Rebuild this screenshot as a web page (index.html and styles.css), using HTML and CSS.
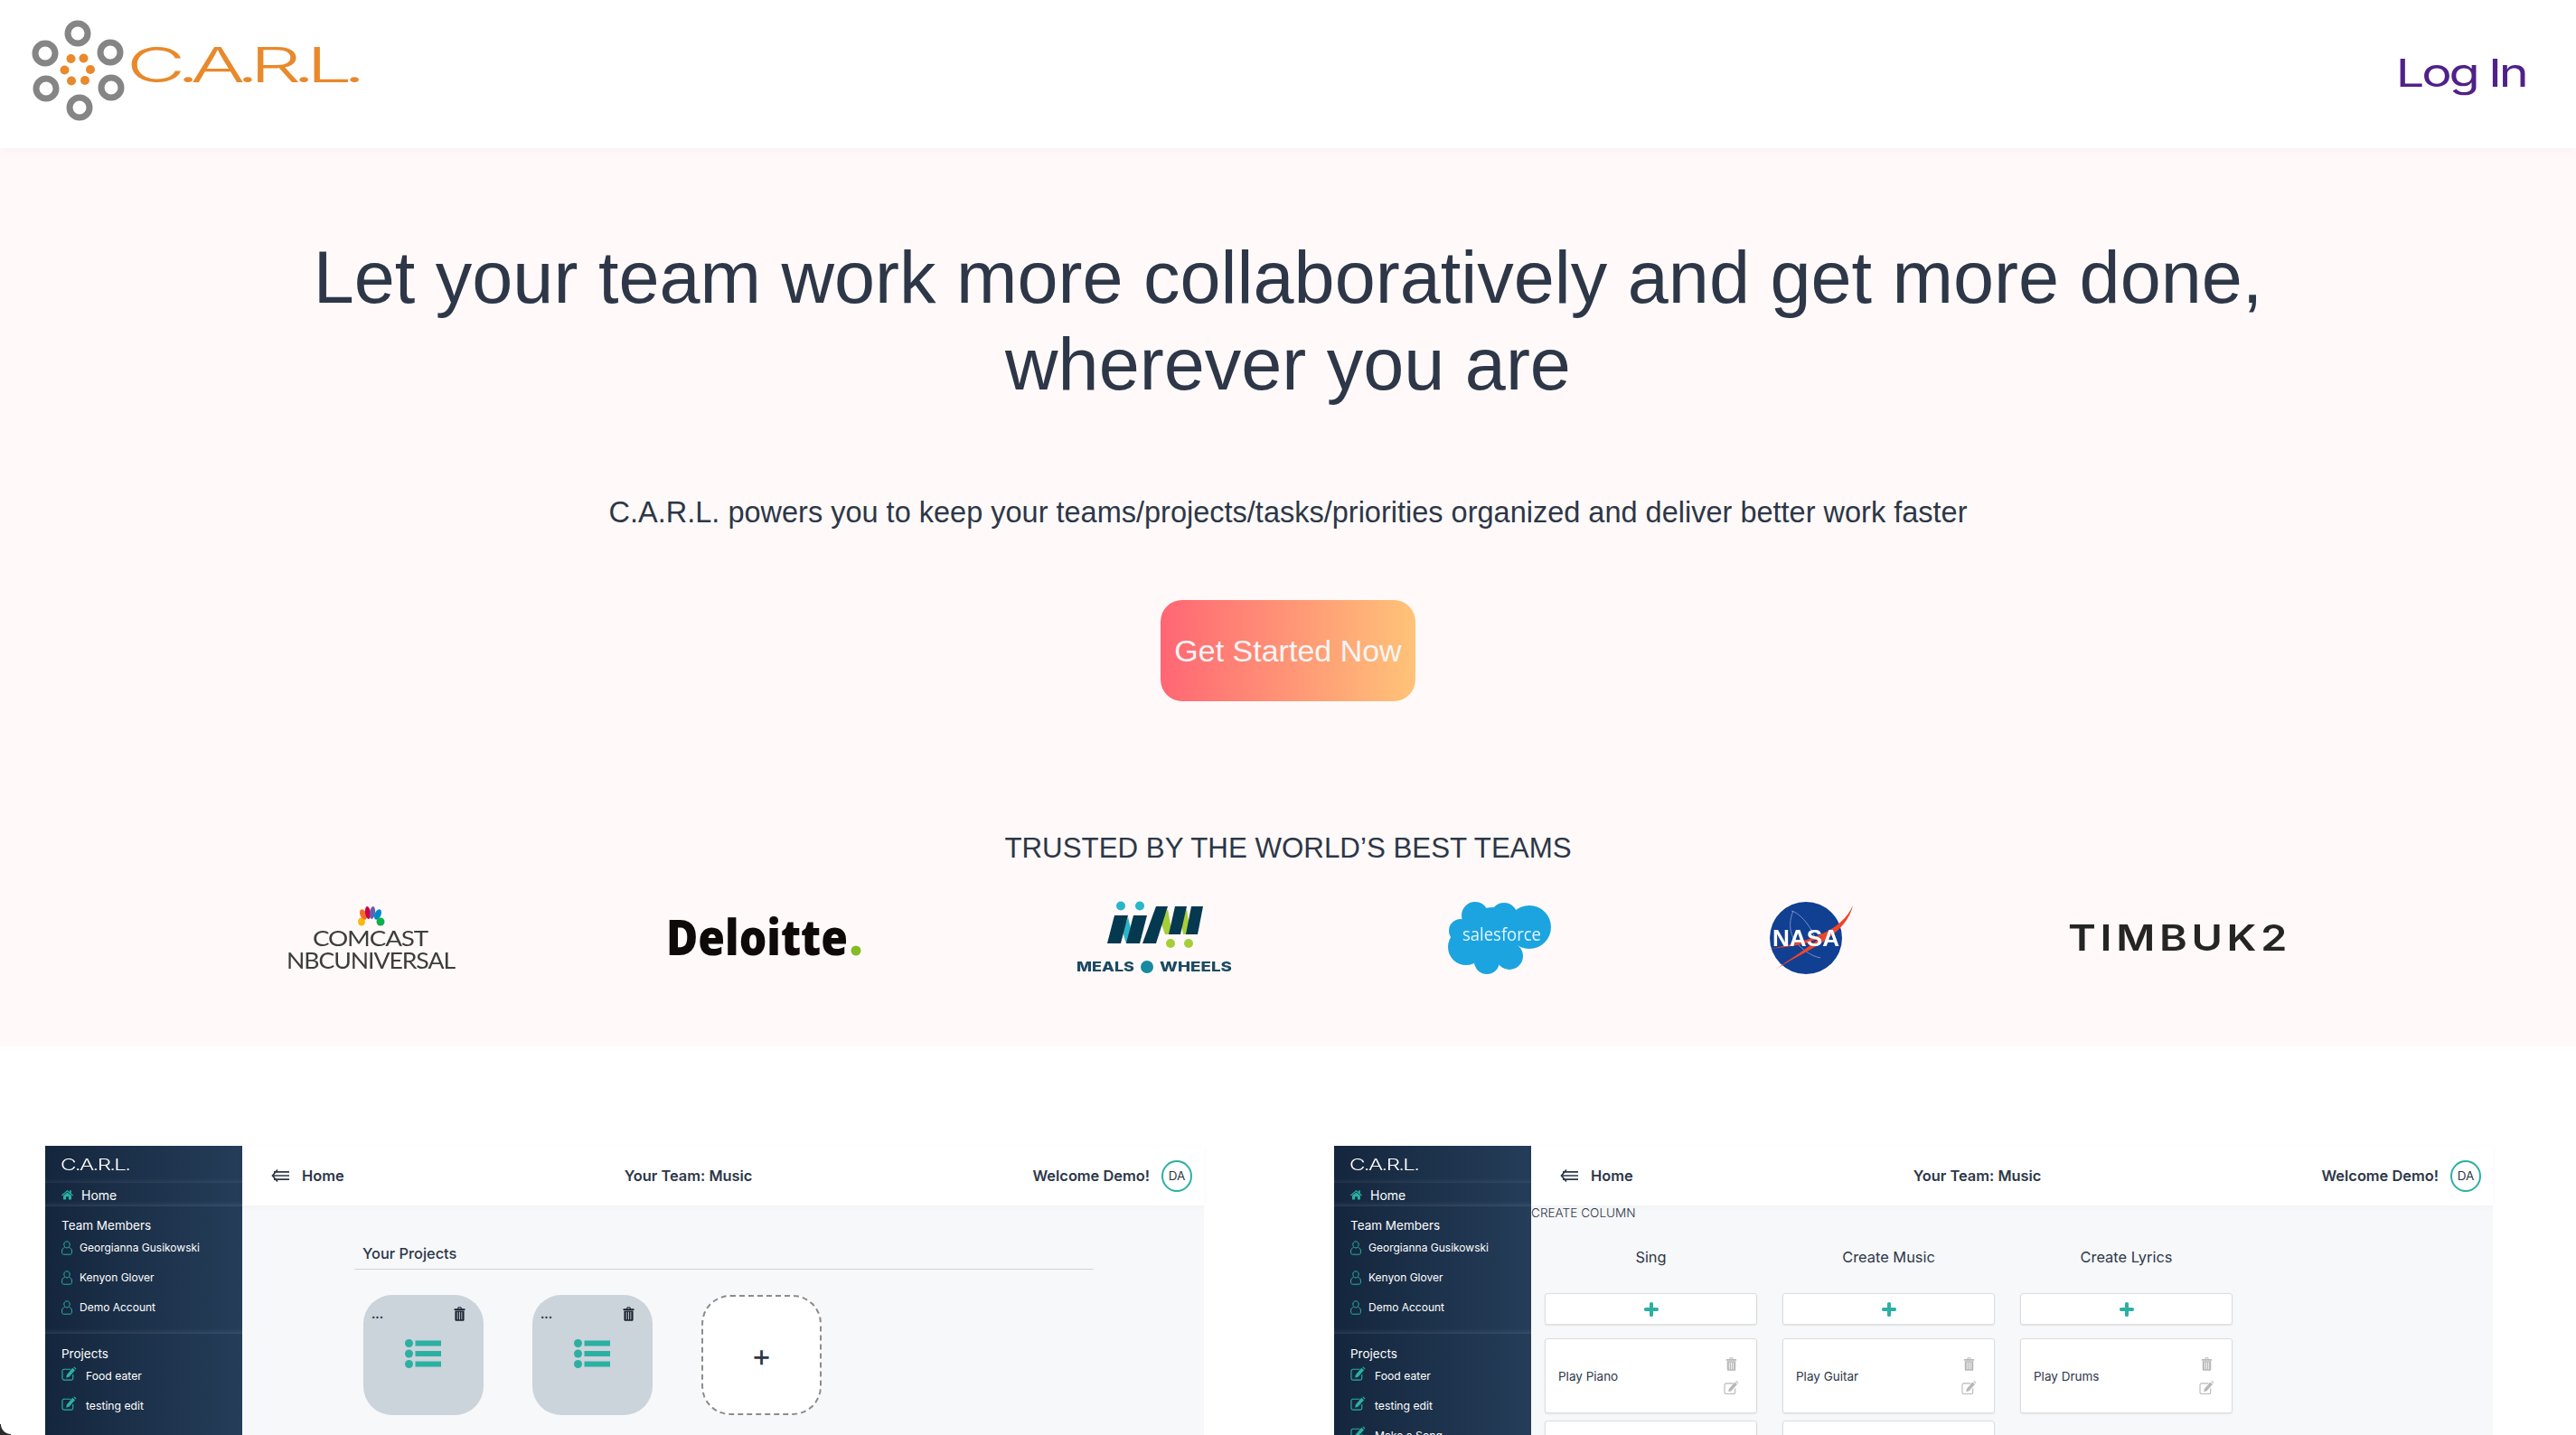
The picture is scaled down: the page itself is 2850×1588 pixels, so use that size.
FILE: index.html
```html
<!DOCTYPE html>
<html lang="en">
<head>
<meta charset="utf-8">
<title>C.A.R.L.</title>
<link rel="stylesheet" href="styles.css">
</head>
<body>
<svg class="sprite" width="0" height="0" aria-hidden="true">
  <symbol id="i-home" viewBox="0 0 14 12"><path d="M7 0.5 0 6.600l.8.9L7 2.200l6.200 5.300.8-.9-2.300-2V1h-1.800v1.900zM2.200 7.200V12h3.300V8.500h3V12h3.300V7.200L7 3.200z" fill="currentColor"/></symbol>
  <symbol id="i-user" viewBox="0 0 12 16"><g fill="none" stroke="currentColor" stroke-width="1"><path d="M6 .8c2 0 3.200 1.500 3.200 3.300S8 8 6 8 2.800 5.900 2.800 4.100 4 .8 6 .8z"/><path d="M3.500 7.500C1.500 8.300.6 9.300.6 11v2.200c0 1.200.8 2 2 2h6.800c1.200 0 2-.8 2-2V11c0-1.700-.9-2.700-2.900-3.500"/></g></symbol>
  <symbol id="i-edit" viewBox="0 0 18 16"><path d="M11 3H3a2 2 0 0 0-2 2v8.500a2 2 0 0 0 2 2h8.500a2 2 0 0 0 2-2V9" fill="none" stroke="currentColor" stroke-width="1.200"/><path d="M13 1.500 16 4 9 12l-3.500 1 .6-3.500zM14 .5l1-.5 2.500 2.300-.8 1z" fill="currentColor"/></symbol>
  <symbol id="i-trash" viewBox="0 0 14 18"><path d="M4.500 2.500V1.200L5.500.4h3l1 .8v1.300H13a.8.800 0 0 1 .8.800v1.200H.2V3.300A.8.800 0 0 1 1 2.500zM5.700 2.500h2.600v-1H5.700zM1.300 5h11.400v11.300c0 .9-.7 1.500-1.500 1.500H2.800c-.8 0-1.500-.6-1.500-1.500zM3.800 6.500v9.500h1V6.500zM6.500 6.500v9.500h1V6.500zM9.200 6.500v9.500h1V6.500z" fill="currentColor" fill-rule="evenodd"/></symbol>
  <symbol id="i-list" viewBox="0 0 40 32"><g fill="currentColor"><circle cx="4.500" cy="4.500" r="4.500"/><circle cx="4.500" cy="16" r="4.500"/><circle cx="4.500" cy="27.500" r="4.500"/><rect x="11.500" y="1.500" width="28.500" height="6"/><rect x="11.500" y="13" width="28.500" height="6"/><rect x="11.500" y="24.500" width="28.500" height="6"/></g></symbol>
  <symbol id="i-back" viewBox="0 0 20 16"><path d="M7 1.500 1.500 8 7 14.500M3 3.800h17M1.500 8H20M3 12.200h17" fill="none" stroke="currentColor" stroke-width="1.700"/></symbol>
  <symbol id="i-plus" viewBox="0 0 16 16"><path d="M6 1.500a2 1.500 0 0 1 4 0V6h4.500a1.500 2 0 0 1 0 4H10v4.500a2 1.500 0 0 1-4 0V10H1.500a1.500 2 0 0 1 0-4H6z" fill="currentColor"/></symbol>
</svg>

<div class="page">
  <header class="topbar">
    <svg class="brand-logo" viewBox="0 0 410 164" width="410" height="164" role="img" aria-label="C.A.R.L.">
      <g fill="none" stroke="#858585" stroke-width="7">
        <circle cx="86" cy="37" r="11"/><circle cx="50" cy="59" r="11"/><circle cx="122" cy="58" r="11"/>
        <circle cx="51" cy="98" r="11"/><circle cx="123" cy="97" r="11"/><circle cx="88" cy="119" r="11"/>
      </g>
      <g fill="#e8892b">
        <circle cx="78.500" cy="65" r="5"/><circle cx="92.500" cy="64.500" r="5"/><circle cx="71.500" cy="77.500" r="5"/>
        <circle cx="100" cy="77" r="5"/><circle cx="79" cy="89.500" r="5"/><circle cx="94" cy="89" r="5"/>
      </g>
      <text class="brand-text" x="140" y="91" textLength="255" lengthAdjust="spacingAndGlyphs">C.A.R.L.</text>
    </svg>
    <a class="login">Log In</a>
  </header>

  <section class="hero">
    <h1 class="hero-title">Let your team work more collaboratively and get more done,<br>wherever you are</h1>
    <p class="hero-sub">C.A.R.L. powers you to keep your teams/projects/tasks/priorities organized and deliver better work faster</p>
    <a class="cta">Get Started Now</a>
    <h2 class="trusted">TRUSTED BY THE WORLD’S BEST TEAMS</h2>
    <div class="logos">
      <svg class="logo" width="184" height="70" viewBox="0 0 184 70" role="img" aria-label="Comcast NBCUniversal">
        <ellipse cx="82" cy="17" rx="4" ry="4.500" fill="#fcb711"/>
        <ellipse cx="84" cy="9" rx="3.500" ry="6" fill="#f37021" transform="rotate(-25 84 9)"/>
        <ellipse cx="89" cy="7" rx="3" ry="7" fill="#cc004c" transform="rotate(-8 89 7)"/>
        <ellipse cx="94" cy="7" rx="3" ry="7" fill="#6460aa" transform="rotate(8 94 7)"/>
        <ellipse cx="100" cy="9" rx="3.500" ry="6" fill="#0089d0" transform="rotate(25 100 9)"/>
        <ellipse cx="103" cy="17" rx="4.500" ry="4.500" fill="#0db14b"/>
        <text class="comcast" x="28" y="44" textLength="127" lengthAdjust="spacingAndGlyphs">COMCAST</text>
        <text class="comcast comcast-lg" x="-1" y="69" textLength="186" lengthAdjust="spacingAndGlyphs">NBCUNIVERSAL</text>
      </svg>
      <svg class="logo" width="213" height="42" viewBox="0 0 213 42" role="img" aria-label="Deloitte">
        <text class="deloitte" x="-3" y="40" textLength="201" lengthAdjust="spacingAndGlyphs">Deloitte</text>
        <circle cx="207" cy="35" r="5.500" fill="#86bc25"/>
      </svg>
      <svg class="logo" width="174" height="80" viewBox="0 0 174 80" role="img" aria-label="Meals on Wheels">
        <g fill="#2bb5c9"><circle cx="49" cy="4.500" r="5"/><circle cx="70" cy="4.500" r="5"/><path d="M57 17l7 29h-9l-4-13z"/></g>
        <g fill="#a6ce39"><circle cx="104" cy="46" r="5"/><circle cx="124" cy="46" r="5"/><path d="M101 8l5 28h-8l-5-14zM122 8l4 28h-8l-3-14z"/></g>
        <g fill="#04394f">
          <path d="M42 15h15l-8 31H34z"/><path d="M63 15h15l-8 31H55z"/><path d="M88 5h13L88 46H73z"/><path d="M109 5h13l-7 31h-13z"/><path d="M127 5h13l-6 31h-13z"/>
        </g>
        <text class="meals" x="0" y="77" textLength="64" lengthAdjust="spacingAndGlyphs">MEALS</text>
        <circle cx="78" cy="72" r="7" fill="#178aa0"/>
        <text class="meals" x="92" y="77" textLength="80" lengthAdjust="spacingAndGlyphs">WHEELS</text>
      </svg>
      <svg class="logo" width="114" height="80" viewBox="0 0 114 80" role="img" aria-label="Salesforce">
        <g fill="#1ca4e0">
          <circle cx="30" cy="15" r="15"/><circle cx="62" cy="16" r="15"/><circle cx="90" cy="28" r="24"/>
          <circle cx="20" cy="50" r="20"/><circle cx="43" cy="66" r="14"/><circle cx="68" cy="60" r="15"/><circle cx="50" cy="36" r="30"/><circle cx="14" cy="32" r="13"/>
        </g>
        <text class="sforce" x="16" y="43" textLength="87" lengthAdjust="spacingAndGlyphs">salesforce</text>
      </svg>
      <svg class="logo" width="97" height="80" viewBox="0 0 97 80" role="img" aria-label="NASA">
        <circle cx="44" cy="40" r="40" fill="#113f92"/>
        <path d="M28 10c8 2 20 14 26 30M30 10c-6 14-4 28 6 38 6 6 14 12 24 14" fill="none" stroke="#8fa4cc" stroke-width=".8"/>
        <path d="M96 4C84 30 56 42 0 53 34 48 44 48 62 38 40 56 24 64 11 75 38 56 88 40 96 4z" fill="#f0442b"/>
        <text class="nasa" x="7" y="49" textLength="74" lengthAdjust="spacingAndGlyphs">NASA</text>
      </svg>
      <svg class="logo" width="243" height="30" viewBox="0 0 243 30" role="img" aria-label="Timbuk2">
        <text class="timbuk" x="-1" y="29" textLength="247" lengthAdjust="spacingAndGlyphs">TIMBUK2</text>
      </svg>
    </div>
  </section>

  <section class="shots">
    <article class="app">
      <aside class="side">
        <div class="side-brand"><span class="side-brand-text">C.A.R.L.</span></div>
        <div class="side-home"><svg class="ic-home"><use href="#i-home"/></svg>Home</div>
        <div class="side-group">
          <div class="side-head">Team Members</div>
          <div class="side-row"><svg class="ic-user"><use href="#i-user"/></svg>Georgianna Gusikowski</div>
          <div class="side-row"><svg class="ic-user"><use href="#i-user"/></svg>Kenyon Glover</div>
          <div class="side-row"><svg class="ic-user"><use href="#i-user"/></svg>Demo Account</div>
        </div>
        <div class="side-group side-projects">
          <div class="side-head">Projects</div>
          <div class="side-row proj"><svg class="ic-edit"><use href="#i-edit"/></svg>Food eater</div>
          <div class="side-row proj"><svg class="ic-edit"><use href="#i-edit"/></svg>testing edit</div>
        </div>
      </aside>
      <div class="main">
        <div class="app-bar">
          <div class="crumb"><svg class="ic-back"><use href="#i-back"/></svg>Home</div>
          <div>Your Team: Music</div>
          <div class="welcome">Welcome Demo!<span class="avatar">DA</span></div>
        </div>
        <div class="projects">
          <div class="projects-title">Your Projects</div>
          <div class="cards">
            <div class="card">
              <div class="card-top"><span class="dots">...</span><svg class="ic-trash"><use href="#i-trash"/></svg></div>
              <svg class="ic-list"><use href="#i-list"/></svg>
            </div>
            <div class="card">
              <div class="card-top"><span class="dots">...</span><svg class="ic-trash"><use href="#i-trash"/></svg></div>
              <svg class="ic-list"><use href="#i-list"/></svg>
            </div>
            <div class="card-add">+</div>
          </div>
        </div>
      </div>
    </article>

    <article class="app">
      <aside class="side">
        <div class="side-brand"><span class="side-brand-text">C.A.R.L.</span></div>
        <div class="side-home"><svg class="ic-home"><use href="#i-home"/></svg>Home</div>
        <div class="side-group">
          <div class="side-head">Team Members</div>
          <div class="side-row"><svg class="ic-user"><use href="#i-user"/></svg>Georgianna Gusikowski</div>
          <div class="side-row"><svg class="ic-user"><use href="#i-user"/></svg>Kenyon Glover</div>
          <div class="side-row"><svg class="ic-user"><use href="#i-user"/></svg>Demo Account</div>
        </div>
        <div class="side-group side-projects">
          <div class="side-head">Projects</div>
          <div class="side-row proj"><svg class="ic-edit"><use href="#i-edit"/></svg>Food eater</div>
          <div class="side-row proj"><svg class="ic-edit"><use href="#i-edit"/></svg>testing edit</div>
          <div class="side-row proj"><svg class="ic-edit"><use href="#i-edit"/></svg>Make a Song</div>
        </div>
      </aside>
      <div class="main">
        <div class="app-bar">
          <div class="crumb"><svg class="ic-back"><use href="#i-back"/></svg>Home</div>
          <div>Your Team: Music</div>
          <div class="welcome">Welcome Demo!<span class="avatar">DA</span></div>
        </div>
        <div class="create">CREATE COLUMN</div>
        <div class="board">
          <div class="col">
            <div class="col-title">Sing</div>
            <div class="add-task"><svg class="ic-plus"><use href="#i-plus"/></svg></div>
            <div class="task"><span>Play Piano</span><div class="task-icons"><svg class="ic-trash"><use href="#i-trash"/></svg><svg class="ic-edit"><use href="#i-edit"/></svg></div></div>
            <div class="task"></div>
          </div>
          <div class="col">
            <div class="col-title">Create Music</div>
            <div class="add-task"><svg class="ic-plus"><use href="#i-plus"/></svg></div>
            <div class="task"><span>Play Guitar</span><div class="task-icons"><svg class="ic-trash"><use href="#i-trash"/></svg><svg class="ic-edit"><use href="#i-edit"/></svg></div></div>
            <div class="task"></div>
          </div>
          <div class="col">
            <div class="col-title">Create Lyrics</div>
            <div class="add-task"><svg class="ic-plus"><use href="#i-plus"/></svg></div>
            <div class="task"><span>Play Drums</span><div class="task-icons"><svg class="ic-trash"><use href="#i-trash"/></svg><svg class="ic-edit"><use href="#i-edit"/></svg></div></div>
          </div>
        </div>
      </div>
    </article>
  </section>
  <div class="corner"></div>
</div>
</body>
</html>
```

FILE: styles.css
```css
* { box-sizing: border-box; }
html, body { margin: 0; padding: 0; background: #fff; }
body { font-family: "Liberation Sans", Arial, sans-serif; color: #2d3748; }
.sprite { position: absolute; }
.page { position: relative; width: 2850px; height: 1588px; overflow: hidden; background: #fff; }

/* top bar */
.topbar { height: 164px; display: flex; justify-content: space-between; align-items: flex-start; background: #fff; box-shadow: 0 2px 8px rgba(0,0,0,.04); position: relative; }
.brand-logo { display: block; filter: blur(.5px); }
.brand-text { font-family: "Inter", sans-serif; font-weight: 300; font-size: 54px; letter-spacing: -6px; fill: #e8892b; }
.login { margin: 52px 55px 0 0; font-family: "Inter", sans-serif; font-size: 43px; line-height: 56px; letter-spacing: -2.500px; color: #4f2189; transform: scaleX(1.3); transform-origin: right center; }

/* hero */
.hero { background: #fffaf9; height: 994px; padding-top: 95px; display: flex; flex-direction: column; align-items: center; text-align: center; }
.hero-title { margin: 0; font-size: 81px; line-height: 96px; font-weight: 400; color: #2d3748; }
.hero-sub { margin: 94px 0 0; font-size: 32.500px; line-height: 44px; color: #2d3748; }
.cta { margin-top: 75px; width: 282px; height: 112px; border-radius: 24px; display: flex; align-items: center; justify-content: center; font-size: 34px; color: #f5f5f5; background: linear-gradient(90deg, #ff6674, #ffc378); }
.trusted { margin: 140px 0 0; font-size: 31.300px; line-height: 46px; font-weight: 400; color: #2d3748; }
.logos { margin-top: 36px; width: 2214px; height: 80px; display: flex; justify-content: space-between; align-items: center; }
.logo { display: block; overflow: visible; filter: blur(.4px); }
.comcast { font-family: "Lato", sans-serif; font-weight: 400; font-size: 24px; letter-spacing: -1px; fill: #3d3d3d; }
.comcast-lg { font-size: 25px; }
.deloitte { font-family: "Open Sans", sans-serif; font-weight: 800; font-size: 54px; fill: #0d0a08; }
.meals { font-family: "Inter", sans-serif; font-weight: 800; font-size: 15px; fill: #1d4a63; }
.sforce { font-family: "Open Sans", sans-serif; font-size: 20px; fill: #e3f4fc; }
.nasa { font-family: "Liberation Sans", sans-serif; font-weight: 700; font-size: 25px; fill: #fff; }
.timbuk { font-family: "Inter", sans-serif; font-weight: 600; font-size: 40px; letter-spacing: 4px; fill: #252525; }

/* product screenshots */
.shots { display: flex; gap: 144px; padding: 110px 50px 0; font-family: "Inter", sans-serif; }
.app { width: 1282px; height: 330px; flex: none; display: flex; background: #f7f8fa; }
.side { width: 218px; flex: none; color: #fff; background: linear-gradient(90deg, #14263d, #253d59); font-size: 13px; }
.side-brand { height: 41px; padding: 14px 0 0 17px; box-shadow: inset 0 -6px 6px -6px rgba(255,255,255,.14); }
.side-brand-text { display: inline-block; font-size: 17px; line-height: 14px; font-weight: 300; letter-spacing: -1.200px; transform: scaleX(1.42); transform-origin: left; }
.side-home { height: 26px; display: flex; align-items: center; gap: 9px; padding-left: 18px; font-size: 14px; box-shadow: inset 0 -6px 6px -6px rgba(255,255,255,.2); }
.side-group { padding: 13px 0 13px 18px; box-shadow: inset 0 -6px 6px -6px rgba(255,255,255,.2); }
.side-projects { padding: 14px 0 40px 18px; box-shadow: none; }
.side-head { height: 16px; line-height: 16px; font-size: 13.500px; }
.side-row { height: 33px; display: flex; align-items: center; gap: 8px; font-size: 12px; }
.side-row.proj { gap: 10px; font-size: 12.200px; }
.ic-home { width: 13px; height: 12px; color: #2bb0a2; }
.ic-user { width: 12px; height: 16px; color: #2bb0a2; }
.ic-edit { width: 17px; height: 16px; color: #2bb0a2; margin-top: -5px; }

.main { flex: 1; min-width: 0; }
.app-bar { height: 66px; padding: 0 13px 0 32px; background: #fff; display: flex; justify-content: space-between; align-items: center; font-size: 16.400px; font-weight: 600; color: #2d3748; box-shadow: 0 2px 6px rgba(0,0,0,.03); position: relative; }
.crumb { display: flex; align-items: center; gap: 14px; }
.ic-back { width: 20px; height: 16px; color: #2d3748; }
.welcome { display: flex; align-items: center; gap: 13px; }
.avatar { width: 34px; height: 35px; border: 2px solid #2bb0a2; border-radius: 50%; display: flex; align-items: center; justify-content: center; font-size: 13.500px; font-weight: 400; }

.projects { padding: 43px 122px 0 124px; }
.projects-title { height: 28px; padding-left: 9px; line-height: 20px; font-size: 16.400px; font-weight: 500; border-bottom: 1px solid #d2d5da; }
.cards { margin-top: 28px; padding-left: 10px; display: flex; gap: 54px; }
.card { width: 133px; height: 133px; border-radius: 32px; background: #cbd3db; display: flex; flex-direction: column; align-items: center; }
.card-top { width: 100%; height: 44px; padding: 13px 20px 0 9px; display: flex; justify-content: space-between; align-items: flex-start; }
.dots { font-size: 13px; font-weight: 700; line-height: 14px; margin-top: 1px; }
.card .ic-trash { width: 13px; height: 16px; color: #1a2230; }
.ic-list { width: 40px; height: 32px; color: #2bb0a2; margin: 5px 0 0 -1px; }
.card-add { width: 133px; height: 133px; border-radius: 32px; border: 2px dashed #8c8c8c; background: #fff; display: flex; align-items: center; justify-content: center; font-size: 34px; color: #2d3748; }

.create { height: 16px; line-height: 16px; font-size: 13.600px; font-weight: 300; }
.board { padding-left: 15px; display: flex; gap: 28px; align-items: flex-start; }
.col { width: 235px; }
.col-title { margin-top: 31px; height: 20px; line-height: 20px; text-align: center; font-size: 16.400px; font-weight: 400; }
.add-task { margin-top: 30px; height: 35px; display: flex; align-items: center; justify-content: center; background: #fff; border: 1px solid #ddd; border-radius: 3px; box-shadow: 0 1px 2px rgba(0,0,0,.08); }
.ic-plus { width: 16px; height: 16px; color: #2bb0a2; }
.task { margin-top: 15px; height: 83px; padding: 0 19px 0 14px; display: flex; justify-content: space-between; align-items: center; background: #fff; border: 1px solid #ddd; border-radius: 3px; font-size: 13.500px; box-shadow: 0 1px 2px rgba(0,0,0,.08); }
.task + .task { margin-top: 8px; }
.task-icons { display: flex; flex-direction: column; align-items: center; gap: 11px; color: #b8b8b8; }
.task-icons .ic-trash { width: 13px; height: 15px; color: #b8b8b8; }
.task-icons .ic-edit { width: 17px; height: 15px; margin: 0; color: #b8b8b8; }

.corner { position: absolute; left: 0; bottom: 0; width: 12px; height: 12px; background: radial-gradient(circle at 100% 0, transparent 10.500px, #2a2a2a 11.500px); }
```
